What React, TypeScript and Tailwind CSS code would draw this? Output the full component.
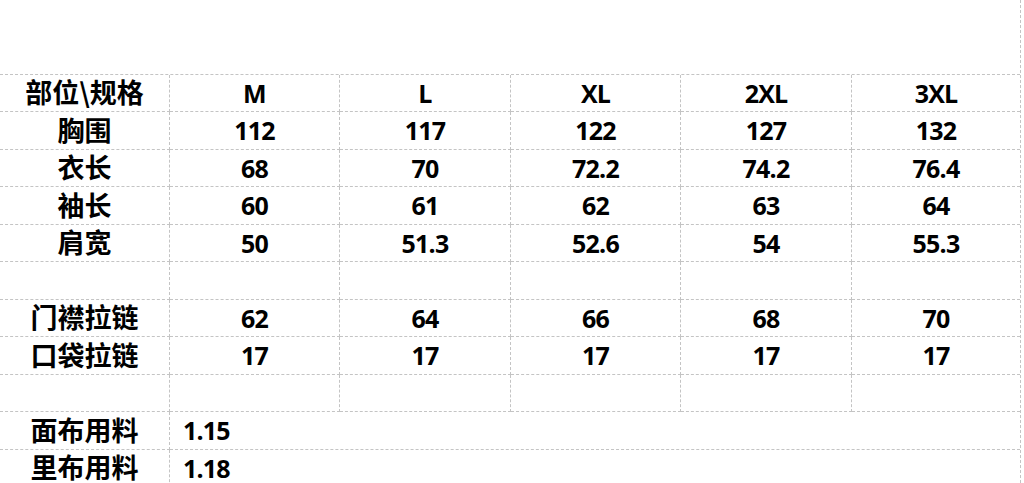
import React from 'react';

const sizes = ['M', 'L', 'XL', '2XL', '3XL'];

const rows: { label: string; values: string[] }[] = [
    { label: '胸围', values: ['112', '117', '122', '127', '132'] },
    { label: '衣长', values: ['68', '70', '72.2', '74.2', '76.4'] },
    { label: '袖长', values: ['60', '61', '62', '63', '64'] },
    { label: '肩宽', values: ['50', '51.3', '52.6', '54', '55.3'] },
    { label: '', values: ['', '', '', '', ''] },
    { label: '门襟拉链', values: ['62', '64', '66', '68', '70'] },
    { label: '口袋拉链', values: ['17', '17', '17', '17', '17'] },
    { label: '', values: ['', '', '', '', ''] },
];

const fabric = [
    { label: '面布用料', value: '1.15' },
    { label: '里布用料', value: '1.18' },
];

const cjk = "font-['Noto_Sans_CJK_SC',sans-serif] text-[27px] font-bold";
const num = "font-['Open_Sans','Liberation_Sans',sans-serif] text-[25px] font-bold tracking-[-0.8px]";
const cell = 'border-b border-dashed border-[#c4c4c4] flex items-center text-black leading-none';

export default function App() {
    return (
        <div className="w-[1024px] h-[483px] overflow-hidden bg-white">
            <div className="w-[1021px] h-full border-r border-dashed border-[#c4c4c4]">
                {/* blank area above the sheet */}
                <div className="h-[74px]" />

                <div className="grid grid-cols-[170px_170px_171px_170px_171px_1fr] grid-rows-[37px_38px_37px_38px_37px_38px_37px_38px_37px_38px_37px] border-t border-dashed border-[#c4c4c4]">
                    {/* Header */}
                    <div className={`${cell} ${cjk} justify-center border-r pb-[3px]`}>部位\规格</div>
                    {sizes.map((s, i) => (
                        <div key={s} className={`${cell} ${num} justify-center ${i < 4 ? 'border-r' : ''}`}>
                            {s}
                        </div>
                    ))}

                    {/* Measurements */}
                    {rows.map((r, ri) => (
                        <React.Fragment key={ri}>
                            <div className={`${cell} ${cjk} justify-center border-r pb-[3px]`}>{r.label}</div>
                            {r.values.map((v, i) => (
                                <div key={i} className={`${cell} ${num} justify-center ${i < 4 ? 'border-r' : ''}`}>
                                    {v}
                                </div>
                            ))}
                        </React.Fragment>
                    ))}

                    {/* Fabric usage */}
                    {fabric.map((f) => (
                        <React.Fragment key={f.label}>
                            <div className={`${cell} ${cjk} justify-center border-r pb-[3px]`}>{f.label}</div>
                            <div className={`${cell} ${num} col-span-5 pl-[13px]`}>{f.value}</div>
                        </React.Fragment>
                    ))}
                </div>
            </div>
        </div>
    );
}
